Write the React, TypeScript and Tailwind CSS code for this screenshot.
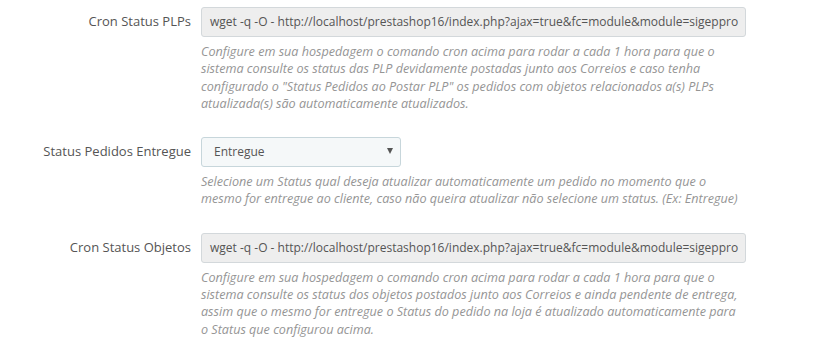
import React from 'react';

const CRON_URL =
  'wget -q -O - http://localhost/prestashop16/index.php?ajax=true&fc=module&module=sigeppro';

const FormRow: React.FC<{ label: string; children: React.ReactNode; help: string }> = ({
  label,
  children,
  help,
}) => (
  <div className="flex gap-[10px] mb-[25px]">
    <label className="w-[191px] shrink-0 text-right pt-[6px] text-[13px] leading-[17px] text-[#555]">
      {label}
    </label>
    <div className="w-[545px]">
      {children}
      <p className="mt-[6px] w-[541px] text-[12.6px] leading-[17.3px] italic text-[#959595]">{help}</p>
    </div>
  </div>
);

const ReadonlyInput: React.FC<{ value: string }> = ({ value }) => (
  <div className="h-[30px] flex items-center px-[8px] bg-[#eeeeee] border border-[#d3d8db] rounded-[3px] text-[12px] text-[#555] whitespace-nowrap overflow-hidden">
    {value}
  </div>
);

export default function App() {
  return (
    <div
      className="w-[823px] h-[357px] bg-white pt-[7px] overflow-hidden"
      style={{ fontFamily: '"Open Sans", "Liberation Sans", sans-serif' }}
    >
      <FormRow
        label="Cron Status PLPs"
        help={'Configure em sua hospedagem o comando cron acima para rodar a cada 1 hora para que o sistema consulte os status das PLP devidamente postadas junto aos Correios e caso tenha configurado o "Status Pedidos ao Postar PLP" os pedidos com objetos relacionados a(s) PLPs atualizada(s) são automaticamente atualizados.'}
      >
        <ReadonlyInput value={CRON_URL} />
      </FormRow>

      <FormRow
        label="Status Pedidos Entregue"
        help="Selecione um Status qual deseja atualizar automaticamente um pedido no momento que o mesmo for entregue ao cliente, caso não queira atualizar não selecione um status. (Ex: Entregue)"
      >
        <div className="w-[200px] h-[30px] flex items-center justify-between pl-[12px] pr-[7px] bg-[#f5f8f9] border border-[#c7d6db] rounded-[3px] text-[12px] text-[#555]">
          <span>Entregue</span>
          <svg width="6" height="6" viewBox="0 0 6 6" className="mb-[3px]">
            <polygon points="0,0 6,0 3,6" fill="#555" />
          </svg>
        </div>
      </FormRow>

      <FormRow
        label="Cron Status Objetos"
        help="Configure em sua hospedagem o comando cron acima para rodar a cada 1 hora para que o sistema consulte os status dos objetos postados junto aos Correios e ainda pendente de entrega, assim que o mesmo for entregue o Status do pedido na loja é atualizado automaticamente para o Status que configurou acima."
      >
        <ReadonlyInput value={CRON_URL} />
      </FormRow>
    </div>
  );
}
